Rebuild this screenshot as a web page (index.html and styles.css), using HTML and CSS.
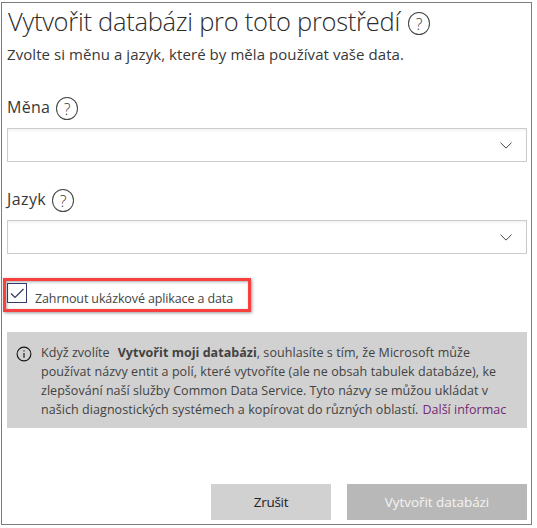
FILE: index.html
```html
<!DOCTYPE html>
<html lang="cs">
<head>
<meta charset="utf-8">
<title>Vytvořit databázi</title>
<link rel="stylesheet" href="styles.css">
</head>
<body>
<main class="dialog">
  <header class="heading">
    <h1 class="title">Vytvořit databázi pro toto prostředí</h1>
    <span class="help help-title">?</span>
  </header>
  <p class="subtitle">Zvolte si měnu a jazyk, které by měla používat vaše data.</p>

  <div class="label-row currency"><span class="label label-currency">Měna</span><span class="help">?</span></div>
  <div class="select"><svg class="chevron" viewBox="0 0 12 7"><path d="M.5 .7 6 6.1 11.5 .7"/></svg></div>

  <div class="label-row language"><span class="label label-language">Jazyk</span><span class="help">?</span></div>
  <div class="select"><svg class="chevron" viewBox="0 0 12 7"><path d="M.5 .7 6 6.1 11.5 .7"/></svg></div>

  <label class="sample">
    <span class="checkbox"><svg viewBox="0 0 18 18"><path d="M3 9.5 7 13.5 15.5 5"/></svg></span>
    <span class="sample-text">Zahrnout ukázkové aplikace a data</span>
  </label>

  <section class="notice">
    <svg class="info" viewBox="0 0 16 16"><circle cx="8" cy="8" r="6.9"/><path d="M8 7v4.7M8 4.2v1.4"/></svg>
    <div class="notice-text">
      <div class="line"><span class="l1a">Když zvolíte</span><b class="l1b">Vytvořit moji databázi</b><span class="l1c">, souhlasíte s tím, že Microsoft může</span></div>
      <div class="line"><span class="l2">používat názvy entit a polí, které vytvoříte (ale ne obsah tabulek databáze), ke</span></div>
      <div class="line"><span class="l3">zlepšování naší služby Common Data Service. Tyto názvy se můžou ukládat v</span></div>
      <div class="line"><span class="l4">našich diagnostických systémech a kopírovat do různých oblastí.</span><a class="link">Další informac</a></div>
    </div>
  </section>

  <footer class="actions">
    <button class="button cancel">Zrušit</button>
    <button class="button create">Vytvořit databázi</button>
  </footer>
</main>
</body>
</html>
```

FILE: styles.css
```css
* { box-sizing: border-box; }
body {
  margin: 0;
  padding: 2px 0 0 1px;
  height: 528px;
  overflow: hidden;
  background: #fff;
  color: #383838;
  font-family: "Open Sans", "Noto Sans", sans-serif;
}
.dialog {
  display: flex;
  flex-direction: column;
  width: 531px;
  height: 523px;
  padding: 0 4px 4px 5px;
  border: 1px solid #7c7c7c;
}
.heading { display: flex; height: 37px; flex: none; white-space: nowrap; }
.title { margin: 0; width: 401px; padding-left: 1px; color: #2c2c2c; font-size: 25.5px; line-height: 37px; font-weight: 300; letter-spacing: -.27px; }
.help {
  display: block;
  flex: none;
  width: 22px;
  height: 23px;
  border: 1px solid #444;
  border-radius: 50%;
  font-size: 16px;
  font-weight: 300;
  line-height: 22px;
  text-align: center;
}
.help-title { margin-top: 9px; }
.subtitle { margin: 2px 0 0; height: 25px; font-size: 15px; line-height: 24px; letter-spacing: .065px; white-space: nowrap; }
.label-row { display: flex; flex: none; height: 32px; white-space: nowrap; }
.currency { margin-top: 29px; }
.language { margin-top: 26px; }
.label { font-size: 16px; line-height: 22px; letter-spacing: .25px; }
.label-currency { width: 49px; }
.label-language { width: 45px; letter-spacing: .4px; }
.label-row .help { margin-top: 1px; }
.select {
  display: flex;
  flex: none;
  align-items: center;
  justify-content: flex-end;
  height: 34px;
  padding-right: 14px;
  border: 1px solid #ccc;
  box-shadow: inset 0 2px 2px #f4f4f4;
}
.chevron { width: 12px; height: 7px; fill: none; stroke: #444; }
.sample {
  display: flex;
  flex: none;
  width: 248px;
  height: 34px;
  margin: 24px 0 0 -4px;
  padding: 2px 0 0 1px;
  border: 3px solid #f94040;
  box-shadow: 1px 1px 3px #999, inset 1px 1px 3px #aaa;
}
.checkbox { width: 20px; height: 20px; border: 1px solid #333a70; }
.checkbox svg { display: block; width: 18px; height: 18px; fill: none; stroke: #303858; stroke-width: 1.2; }
.sample-text { margin: 6px 0 0 8px; color: #444; font-size: 12.5px; line-height: 20px; letter-spacing: -.12px; white-space: nowrap; }
.notice { display: flex; flex: none; height: 96px; margin-top: 20px; padding: 11px 0 0 9px; background: #d1d1d1; color: #424242; }
.info { flex: none; width: 16px; height: 16px; margin: 3px 9px 0 0; fill: none; stroke: #111; stroke-width: 1.1; }
.notice-text { font-size: 12.5px; line-height: 19px; }
.line { display: flex; height: 19px; white-space: pre; }
.l1a { letter-spacing: .05px; }
.l1b { margin-left: 8px; letter-spacing: .03px; }
.l1c { letter-spacing: .07px; }
.l2 { letter-spacing: .075px; }
.l3 { letter-spacing: .042px; }
.l4 { letter-spacing: .065px; }
.link { margin-left: 4px; color: #742774; }
.actions { display: flex; justify-content: flex-end; gap: 16px; margin-top: auto; }
.button { height: 36px; padding: 1px 0 0; border: 0; font: 13.5px/35px "Open Sans", sans-serif; white-space: nowrap; }
.cancel { width: 120px; background: #d1d1d1; color: #222; letter-spacing: -.3px; }
.create { width: 180px; background: #b8b8b8; color: #f4f4f4; letter-spacing: -.05px; }
```
